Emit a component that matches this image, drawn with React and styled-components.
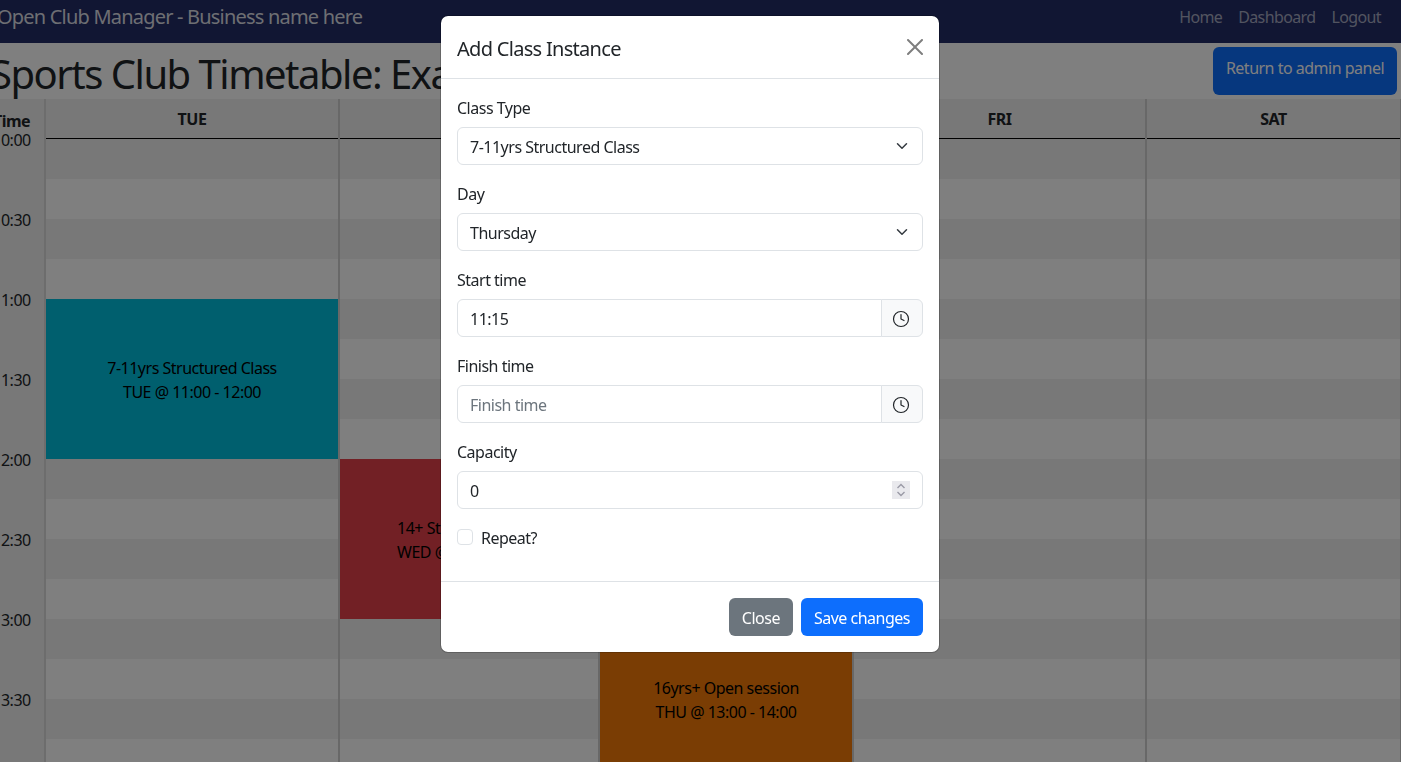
import React from "react";
import styled, { createGlobalStyle } from "styled-components";
import { Clock as ClockGlyph } from "lucide-react";

const FONT = `"Noto Sans", "Open Sans", "Liberation Sans", sans-serif`;

const GlobalStyle = createGlobalStyle`
    html, body {
        margin: 0;
        padding: 0;
        height: 100%;
        overflow: hidden;
        background: #ffffff;
    }

    * {
        box-sizing: border-box;
    }

    body {
        font-family: ${FONT};
        font-size: 16px;
        line-height: 24px;
        color: #212529;
        letter-spacing: -0.5px;
    }
`;

// the reference page is scrolled sideways a little, so the left edge is cut off
const Page = styled.div`
    width: 1422px;
    height: 762px;
    margin-left: -21px;
    overflow: hidden;
`;

const NavBar = styled.nav`
    display: flex;
    align-items: center;
    justify-content: space-between;
    height: 43px;
    padding: 0 20px 9px 18px;
    background: #222c66;
`;

const Brand = styled.span`
    font-size: 20px;
    letter-spacing: -0.8px;
    color: rgba(255, 255, 255, 0.85);
`;

const NavLinks = styled.div`
    display: flex;
    gap: 16px;
`;

const NavLink = styled.a`
    letter-spacing: -0.62px;
    color: rgba(255, 255, 255, 0.6);
`;

const TitleRow = styled.div`
    display: flex;
    justify-content: space-between;
    align-items: flex-start;
    height: 56px;
    padding: 4px 4px 0 11px;
`;

const Title = styled.h1`
    margin: 0;
    font-size: 40px;
    font-weight: 400;
    line-height: 54px;
    white-space: nowrap;
    letter-spacing: -1.5px;
`;

const ReturnButton = styled.button`
    width: 184px;
    height: 48px;
    padding: 9px 0 15px;
    border: 0;
    border-radius: 6px;
    background: #0d6efd;
    color: #ffffff;
    font: inherit;
    letter-spacing: inherit;
`;

const Timetable = styled.div`
    display: grid;
    grid-template-columns: 67px 294px 260px 254px 293px 255px;
`;

const TimeColumn = styled.div`
    background: #f0f0f0;
    border-right: 2px solid #dadada;
    text-align: center;
`;

const TimeHead = styled.div`
    height: 29px;
    line-height: 44px;
    font-weight: 700;
`;

const TimeLabel = styled.div`
    height: 80px;
`;

const DayColumn = styled.div`
    position: relative;
    border-right: 2px solid #d0d0d0;
`;

const DayHead = styled.div`
    height: 40px;
    padding-top: 8px;
    background: #f0f0f0;
    border-bottom: 1px solid #000000;
    text-align: center;
    font-weight: 700;
`;

const Slot = styled.div`
    height: 40px;
    background: ${(p) => (p.$alt ? "#ffffff" : "#f0f0f0")};
`;

// a class sits on the time axis, so its place comes from its start time
const ClassBlock = styled.div`
    position: absolute;
    left: 0;
    right: 0;
    top: ${(p) => p.$top}px;
    height: 160px;
    padding-top: 2px;
    display: flex;
    flex-direction: column;
    align-items: center;
    justify-content: center;
    background: ${(p) => p.$color};
    color: #000000;
`;

const Backdrop = styled.div`
    position: fixed;
    inset: 0;
    background: rgba(0, 0, 0, 0.5);
`;

const Modal = styled.div`
    position: fixed;
    top: 15px;
    left: 440px;
    width: 500px;
    background: #ffffff;
    border: 1px solid rgba(0, 0, 0, 0.2);
    background-clip: padding-box;
    border-radius: 8px;
`;

const ModalHeader = styled.div`
    display: flex;
    align-items: center;
    justify-content: space-between;
    height: 63px;
    padding: 0 16px;
    border-bottom: 1px solid #dee2e6;
`;

const ModalTitle = styled.h5`
    margin: 0;
    padding-top: 4px;
    font-size: 20px;
    font-weight: 400;
    line-height: 30px;
    letter-spacing: -0.7px;
`;

const CloseIcon = styled.svg`
    width: 16px;
    height: 16px;
    opacity: 0.5;
`;

const ModalBody = styled.div`
    padding: 16px;
`;

const Field = styled.div`
    margin-bottom: 16px;
`;

const Label = styled.label`
    display: block;
    padding-top: 1px;
    margin-bottom: 7px;
`;

const SelectBox = styled.div`
    position: relative;
`;

const Select = styled.select`
    display: block;
    width: 100%;
    height: 38px;
    padding: 2px 36px 0 12px;
    appearance: none;
    background: #ffffff;
    border: 1px solid #dee2e6;
    border-radius: 6px;
    color: #212529;
    font: inherit;
    letter-spacing: inherit;
`;

const Chevron = styled.svg`
    position: absolute;
    top: 13px;
    right: 13px;
    width: 16px;
    height: 12px;
    pointer-events: none;
`;

const InputGroup = styled.div`
    display: flex;
`;

const Input = styled.input`
    display: block;
    flex: 1;
    width: 100%;
    min-width: 0;
    height: 38px;
    padding: 2px 12px 0;
    background: #ffffff;
    border: 1px solid #dee2e6;
    border-radius: ${(p) => (p.$joined ? "6px 0 0 6px" : "6px")};
    color: #212529;
    font: inherit;
    letter-spacing: inherit;

    &::placeholder {
        color: #6c757d;
        opacity: 1;
    }
`;

const Addon = styled.span`
    display: flex;
    align-items: center;
    justify-content: center;
    width: 42px;
    height: 38px;
    margin-left: -1px;
    padding: 1px 2px 0 0;
    background: #f8f9fa;
    border: 1px solid #dee2e6;
    border-radius: 0 6px 6px 0;
    color: #212529;
`;

const NumberBox = styled.div`
    position: relative;
`;

const Spinner = styled.div`
    position: absolute;
    top: 10px;
    right: 13px;
    width: 18px;
    height: 18px;
    display: flex;
    flex-direction: column;
    align-items: center;
    justify-content: center;
    gap: 2px;
    background: #e9e9ed;
`;

const SpinArrow = styled.svg`
    display: block;
    width: 10px;
    height: 6px;
`;

const CheckRow = styled.div`
    display: flex;
    align-items: center;
    gap: 8px;
    height: 24px;
    margin-bottom: 16px;
`;

const CheckBox = styled.input.attrs({ type: "checkbox" })`
    width: 16px;
    height: 16px;
    margin: 0;
    appearance: none;
    background: #ffffff;
    border: 1px solid #dee2e6;
    border-radius: 4px;
`;

const CheckLabel = styled.span`
    padding-top: 2px;
`;

const ModalFooter = styled.div`
    display: flex;
    justify-content: flex-end;
    gap: 8px;
    padding: 16px;
    border-top: 1px solid #dee2e6;
`;

const Button = styled.button`
    height: 38px;
    padding: 2px 13px 0;
    border: 0;
    border-radius: 6px;
    background: ${(p) => (p.$primary ? "#0d6efd" : "#6c757d")};
    color: #ffffff;
    font: inherit;
    letter-spacing: inherit;
`;

const TIMES = ["10:00", "10:30", "11:00", "11:30", "12:00", "12:30", "13:00", "13:30", "14:00"];

const DAYS = [
    { name: "TUE", block: { top: 200, color: "#00bfdd", title: "7-11yrs Structured Class", when: "TUE @ 11:00 - 12:00" } },
    { name: "WED", block: { top: 360, color: "#e4404a", title: "14+ Structured Class", when: "WED @ 12:00 - 13:00" } },
    { name: "THU", block: { top: 520, color: "#f57a08", title: "16yrs+ Open session", when: "THU @ 13:00 - 14:00" } },
    { name: "FRI" },
    { name: "SAT" },
];

const SLOTS = Array.from({ length: 16 }, (_, i) => i);

function Clock() {
    return (
        <Addon>
            <ClockGlyph size={18} strokeWidth={1.6} />
        </Addon>
    );
}

function App() {
    return (
        <>
            <GlobalStyle />
            <Page>
                <NavBar>
                    <Brand>Open Club Manager - Business name here</Brand>
                    <NavLinks>
                        <NavLink>Home</NavLink>
                        <NavLink>Dashboard</NavLink>
                        <NavLink>Logout</NavLink>
                    </NavLinks>
                </NavBar>
                <TitleRow>
                    <Title>Sports Club Timetable: Example</Title>
                    <ReturnButton>Return to admin panel</ReturnButton>
                </TitleRow>
                <Timetable>
                    <TimeColumn>
                        <TimeHead>Time</TimeHead>
                        {TIMES.map((t) => (
                            <TimeLabel key={t}>{t}</TimeLabel>
                        ))}
                    </TimeColumn>
                    {DAYS.map((day) => (
                        <DayColumn key={day.name}>
                            <DayHead>{day.name}</DayHead>
                            {SLOTS.map((i) => (
                                <Slot key={i} $alt={i % 2 === 1} />
                            ))}
                            {day.block && (
                                <ClassBlock $top={day.block.top} $color={day.block.color}>
                                    <div>{day.block.title}</div>
                                    <div>{day.block.when}</div>
                                </ClassBlock>
                            )}
                        </DayColumn>
                    ))}
                </Timetable>
            </Page>
            <Backdrop />
            <Modal>
                <ModalHeader>
                    <ModalTitle>Add Class Instance</ModalTitle>
                    <CloseIcon viewBox="0 0 16 16" fill="#000">
                        <path d="M.293.293a1 1 0 0 1 1.414 0L8 6.586 14.293.293a1 1 0 1 1 1.414 1.414L9.414 8l6.293 6.293a1 1 0 0 1-1.414 1.414L8 9.414l-6.293 6.293a1 1 0 0 1-1.414-1.414L6.586 8 .293 1.707a1 1 0 0 1 0-1.414z" />
                    </CloseIcon>
                </ModalHeader>
                <ModalBody>
                    <Field>
                        <Label>Class Type</Label>
                        <SelectBox>
                            <Select defaultValue="7-11yrs Structured Class">
                                <option>7-11yrs Structured Class</option>
                                <option>14+ Structured Class</option>
                                <option>16yrs+ Open session</option>
                            </Select>
                            <Chevron viewBox="0 0 16 16" fill="none" stroke="#343a40" strokeWidth="2" strokeLinecap="round" strokeLinejoin="round">
                                <path d="m2 5 6 6 6-6" />
                            </Chevron>
                        </SelectBox>
                    </Field>
                    <Field>
                        <Label>Day</Label>
                        <SelectBox>
                            <Select defaultValue="Thursday">
                                <option>Tuesday</option>
                                <option>Wednesday</option>
                                <option>Thursday</option>
                                <option>Friday</option>
                                <option>Saturday</option>
                            </Select>
                            <Chevron viewBox="0 0 16 16" fill="none" stroke="#343a40" strokeWidth="2" strokeLinecap="round" strokeLinejoin="round">
                                <path d="m2 5 6 6 6-6" />
                            </Chevron>
                        </SelectBox>
                    </Field>
                    <Field>
                        <Label>Start time</Label>
                        <InputGroup>
                            <Input $joined defaultValue="11:15" />
                            <Clock />
                        </InputGroup>
                    </Field>
                    <Field>
                        <Label>Finish time</Label>
                        <InputGroup>
                            <Input $joined placeholder="Finish time" />
                            <Clock />
                        </InputGroup>
                    </Field>
                    <Field>
                        <Label>Capacity</Label>
                        <NumberBox>
                            <Input defaultValue="0" />
                            <Spinner>
                                <SpinArrow viewBox="0 0 10 6" fill="none" stroke="#9a9aa6" strokeWidth="1.4">
                                    <path d="m1.5 5 3.5-3.5 3.5 3.5" />
                                </SpinArrow>
                                <SpinArrow viewBox="0 0 10 6" fill="none" stroke="#9a9aa6" strokeWidth="1.4">
                                    <path d="m1.5 1 3.5 3.5 3.5-3.5" />
                                </SpinArrow>
                            </Spinner>
                        </NumberBox>
                    </Field>
                    <CheckRow>
                        <CheckBox />
                        <CheckLabel>Repeat?</CheckLabel>
                    </CheckRow>
                </ModalBody>
                <ModalFooter>
                    <Button>Close</Button>
                    <Button $primary>Save changes</Button>
                </ModalFooter>
            </Modal>
        </>
    );
}

export default App;
